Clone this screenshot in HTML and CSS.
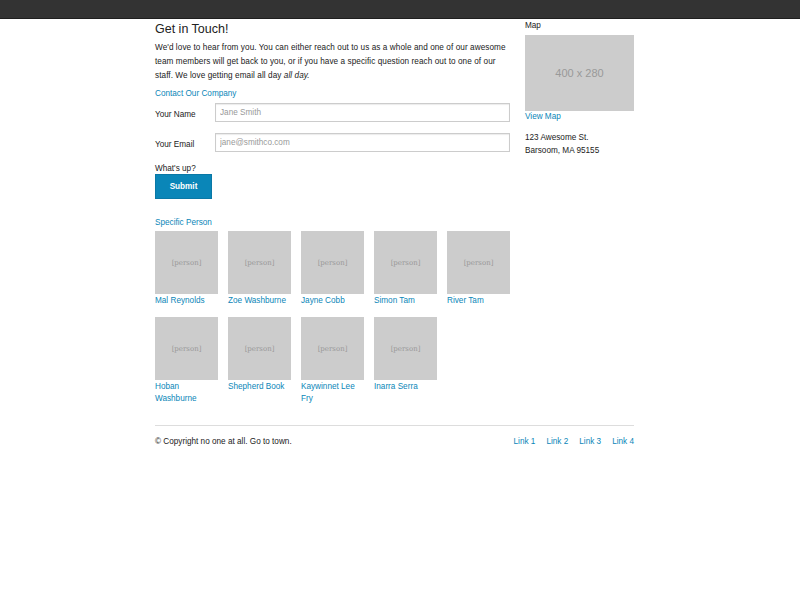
FILE: index.html
```html
<!DOCTYPE html>
<html>
<head>
<meta charset="utf-8">
<link rel="stylesheet" href="styles.css">
</head>
<body>
<div class="topbar"></div>
<div class="page">
  <div class="main">
    <h1 class="title">Get in Touch!</h1>
    <p class="intro">We'd love to hear from you. You can either reach out to us as a whole and one of our awesome team members will get back to you, or if you have a specific question reach out to one of our staff. We love getting email all day <em>all day.</em></p>
    <a class="section-link" href="#">Contact Our Company</a>
    <form class="form">
      <div class="field">
        <label class="label">Your Name</label>
        <input class="input" type="text" placeholder="Jane Smith">
      </div>
      <div class="field">
        <label class="label">Your Email</label>
        <input class="input" type="text" placeholder="jane@smithco.com">
      </div>
      <div class="whatsup">What's up?</div>
      <button class="submit" type="button">Submit</button>
    </form>
    <a class="section-link person-head" href="#">Specific Person</a>
    <div class="people">
      <div class="person"><div class="ph">[person]</div><a href="#">Mal Reynolds</a></div>
      <div class="person"><div class="ph">[person]</div><a href="#">Zoe Washburne</a></div>
      <div class="person"><div class="ph">[person]</div><a href="#">Jayne Cobb</a></div>
      <div class="person"><div class="ph">[person]</div><a href="#">Simon Tam</a></div>
      <div class="person"><div class="ph">[person]</div><a href="#">River Tam</a></div>
      <div class="person"><div class="ph">[person]</div><a href="#">Hoban Washburne</a></div>
      <div class="person"><div class="ph">[person]</div><a href="#">Shepherd Book</a></div>
      <div class="person"><div class="ph">[person]</div><a href="#">Kaywinnet Lee Fry</a></div>
      <div class="person"><div class="ph">[person]</div><a href="#">Inarra Serra</a></div>
    </div>
  </div>
  <div class="side">
    <div class="map-title">Map</div>
    <div class="map">400 x 280</div>
    <a class="view-map" href="#">View Map</a>
    <p class="address">123 Awesome St.<br>Barsoom, MA 95155</p>
  </div>
</div>
<div class="footer">
  <div class="copy">© Copyright no one at all. Go to town.</div>
  <div class="links">
    <a href="#">Link 1</a>
    <a href="#">Link 2</a>
    <a href="#">Link 3</a>
    <a href="#">Link 4</a>
  </div>
</div>
</body>
</html>
```
FILE: styles.css
```css
* { box-sizing: border-box; }
html, body { margin: 0; padding: 0; background: #fff; }
body {
  font-family: "Liberation Sans", Arial, Helvetica, sans-serif;
  font-size: 8.2px;
  line-height: 14px;
  color: #222;
}
a { color: #0a86b8; text-decoration: none; }
.topbar {
  height: 19px;
  background: #333;
  border-bottom: 1px solid #1f1f1f;
}
.page {
  width: 480px;
  margin: 0 auto 0 155px;
  display: flex;
  gap: 15px;
}
.main { width: 355px; }
.side { width: 110px; }
.title {
  font-size: 12.5px;
  font-weight: normal;
  margin: 1px 0 0;
  line-height: 18px;
}
.intro { margin: 3px 0 0; font-size: 8.2px; letter-spacing: 0.07px; }
.intro em { font-style: italic; padding-right: 1px; }
.section-link { display: block; margin-top: 4px; }
.field {
  display: flex;
  align-items: center;
  height: 19px;
  margin-top: 2px;
}
.field + .field { margin-top: 11px; }
.label { width: 60px; padding-top: 4px; }
.input {
  width: 295px;
  height: 19px;
  border: 1px solid #ccc;
  box-shadow: inset 0 1px 1px rgba(0,0,0,0.08);
  font-family: inherit;
  font-size: 8.2px;
  padding: 0 4px;
  color: #222;
  outline: none;
}
.input::placeholder { color: #999; }
.whatsup { margin-top: 12px; line-height: 10px; }
.submit {
  display: block;
  width: 57px;
  height: 25px;
  background: #0a86b8;
  border: 1px solid #0a78a6;
  color: #fff;
  font-family: inherit;
  font-size: 8.2px;
  font-weight: bold;
  padding: 0;
  margin-top: 0;
}
.person-head { margin-top: 17px; }
.people {
  display: grid;
  grid-template-columns: repeat(5, 63px);
  column-gap: 10px;
  row-gap: 10px;
  margin-top: 1px;
}
.person a { display: block; line-height: 12px; padding-top: 1px; }
.ph {
  width: 63px;
  height: 63px;
  background: #ccc;
  color: #999;
  font-family: "DejaVu Serif", serif;
  font-size: 7px;
  display: flex;
  align-items: center;
  justify-content: center;
}
.map-title { line-height: 14px; }
.map {
  width: 109px;
  height: 76px;
  background: #ccc;
  color: #999;
  font-size: 11px;
  display: flex;
  align-items: center;
  justify-content: center;
  margin-top: 2px;
}
.view-map { display: block; line-height: 11px; }
.address { margin: 9px 0 0; line-height: 13px; }
.footer {
  width: 479px;
  margin: 20px 0 0 155px;
  border-top: 1px solid #ddd;
  padding-top: 9px;
  display: flex;
  justify-content: space-between;
}
.links { display: flex; gap: 11px; }
```
